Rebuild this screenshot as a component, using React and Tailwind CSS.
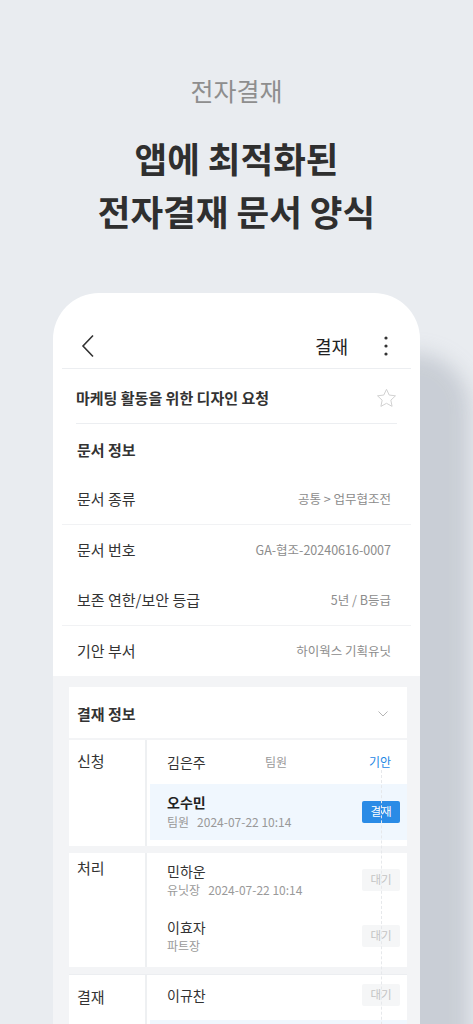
import React from 'react';

const font = { fontFamily: '"Noto Sans CJK KR", "Noto Sans", sans-serif' };

function Badge({ children, active }) {
  return (
    <span
      className={
        active
          ? 'flex h-[22px] w-[38px] items-center justify-center rounded-[2px] bg-[#2a8be6] text-[11.5px] text-white'
          : 'flex h-[22px] w-[38px] items-center justify-center rounded-[2px] bg-[#f5f6f7] text-[11.5px] text-[#c4c4c4]'
      }
    >
      {children}
    </span>
  );
}

function InfoRow({ label, value, line }) {
  return (
    <div
      className={`mx-[9px] flex h-[50px] items-center justify-between pl-[15px] pr-[20px] ${
        line ? 'h-[51px] border-b border-[#f1f2f4]' : ''
      }`}
    >
      <span className="text-[15px] text-[#333]">{label}</span>
      <span className="text-[12.5px] text-[#8c8c8c]">{value}</span>
    </div>
  );
}

function Person({ name, role, date }) {
  return (
    <div className="flex flex-col">
      <span className="text-[14px] leading-[20px] text-[#333]">{name}</span>
      <span className="text-[12px] leading-[18px] text-[#9a9a9a]">
        {role}
        {date && <span className="ml-[8px]">{date}</span>}
      </span>
    </div>
  );
}

export default function App() {
  return (
    <div style={font} className="h-[1024px] w-[473px] overflow-hidden bg-[#e9ecf0]">
      <div className="flex flex-col items-center pt-[74px]">
        <p className="text-[25px] leading-[32px] text-[#8e8e8e]">전자결재</p>
        <h1 className="mt-[25px] text-center text-[35.5px] font-bold leading-[53px] text-[#2f2f2f]">
          앱에 최적화된
          <br />
          전자결재 문서 양식
        </h1>
      </div>

      <div className="ml-[53px] mt-[56px] w-[367px] overflow-hidden rounded-t-[46px] bg-white shadow-[40px_70px_20px_10px_rgba(150,158,172,0.38)]">
        {/* header */}
        <div className="mx-[9px] flex h-[76px] items-end border-b border-[#eceef1] pb-[10px]">
          <div className="flex h-[24px] w-full items-center justify-between pl-[19px] pr-[22px]">
            <svg width="14" height="24" viewBox="0 0 14 24" fill="none">
              <polyline points="12,1.5 2,12 12,22.5" stroke="#333" strokeWidth="1.6" />
            </svg>
            <div className="flex items-center gap-[35px]">
              <span className="text-[18px] text-[#222]">결재</span>
              <svg width="6" height="22" viewBox="0 0 6 22">
                <circle cx="3" cy="3" r="1.6" fill="#333" />
                <circle cx="3" cy="11" r="1.6" fill="#333" />
                <circle cx="3" cy="19" r="1.6" fill="#333" />
              </svg>
            </div>
          </div>
        </div>

        {/* title */}
        <div className="mx-[23px] flex h-[55px] items-center justify-between border-b border-[#eceef1] pt-[4px]">
          <span className="text-[15px] font-bold text-[#333]">마케팅 활동을 위한 디자인 요청</span>
          <svg width="21" height="20" viewBox="0 0 24 23" fill="none">
            <path
              d="M12 1.5l3.1 6.6 7.2.9-5.3 5 1.4 7.1L12 17.6l-6.4 3.5L7 14l-5.3-5 7.2-.9z"
              stroke="#cfcfcf"
              strokeWidth="1.1"
              strokeLinejoin="round"
            />
          </svg>
        </div>

        <div className="mx-[9px] flex h-[50px] items-center pl-[15px] pt-[2px]">
          <span className="text-[15px] font-bold text-[#333]">문서 정보</span>
        </div>
        <InfoRow label="문서 종류" value="공통 > 업무협조전" line />
        <InfoRow label="문서 번호" value="GA-협조-20240616-0007" />
        <InfoRow label="보존 연한/보안 등급" value="5년 / B등급" line />
        <InfoRow label="기안 부서" value="하이웍스 기획유닛" />

        {/* approval */}
        <div className="relative bg-[#f3f4f6] pb-[20px] pl-[16px] pr-[13px] pt-[11px]">
          <div className="flex h-[51px] items-center justify-between bg-white pl-[8px] pr-[19px] pt-[3px]">
            <span className="text-[15px] font-bold text-[#333]">결재 정보</span>
            <svg width="10" height="6" viewBox="0 0 10 6" fill="none">
              <polyline points="0.5,0.5 5,5 9.5,0.5" stroke="#b5b5b5" strokeWidth="1" />
            </svg>
          </div>

          <div className="mt-[2px] flex bg-white">
            <div className="w-[78px] shrink-0 border-r-2 border-[#eef0f2] pl-[8px] pt-[10px] text-[15px] text-[#333]">
              신청
            </div>
            <div className="flex-1 pb-[6px] pl-[3px]">
              <div className="flex h-[44px] items-center pl-[17px] pr-[16px]">
                <span className="w-[98px] text-[14px] text-[#333]">김은주</span>
                <span className="text-[12px] text-[#9a9a9a]">팀원</span>
                <span className="ml-auto text-[12px] text-[#1e88e5]">기안</span>
              </div>
              <div className="flex h-[56px] items-center justify-between bg-[#f0f7fe] pl-[17px] pr-[7px]">
                <div className="flex flex-col">
                  <span className="text-[14px] font-bold leading-[20px] text-[#222]">오수민</span>
                  <span className="text-[12px] leading-[20px] text-[#999]">
                    팀원<span className="ml-[8px]">2024-07-22 10:14</span>
                  </span>
                </div>
                <Badge active>결재</Badge>
              </div>
            </div>
          </div>

          <div className="mt-[7px] flex bg-white">
            <div className="w-[78px] shrink-0 border-r-2 border-[#eef0f2] pl-[8px] pt-[4px] text-[15px] text-[#333]">
              처리
            </div>
            <div className="flex-1 pb-[12px] pl-[3px] pt-[8px]">
              <div className="flex items-center justify-between pl-[17px] pr-[7px]">
                <Person name="민하운" role="유닛장" date="2024-07-22 10:14" />
                <Badge>대기</Badge>
              </div>
              <div className="mt-[18px] flex items-center justify-between pl-[17px] pr-[7px]">
                <Person name="이효자" role="파트장" />
                <Badge>대기</Badge>
              </div>
            </div>
          </div>

          <div className="mt-[7px] flex border-t border-[#eceef1] bg-white">
            <div className="w-[78px] shrink-0 border-r-2 border-[#eef0f2] pl-[8px] pt-[11px] text-[15px] text-[#333]">
              결재
            </div>
            <div className="flex-1 pl-[3px] pt-[9px]">
              <div className="flex h-[22px] items-center justify-between pl-[17px] pr-[7px]">
                <span className="text-[14px] text-[#333]">이규찬</span>
                <Badge>대기</Badge>
              </div>
              <div className="mt-[14px] h-[20px] bg-[#f0f7fe]" />
            </div>
          </div>

          <div className="pointer-events-none absolute bottom-0 left-[328px] top-[94px] border-l border-dashed border-[#e6e8eb]" />
        </div>
      </div>
    </div>
  );
}
